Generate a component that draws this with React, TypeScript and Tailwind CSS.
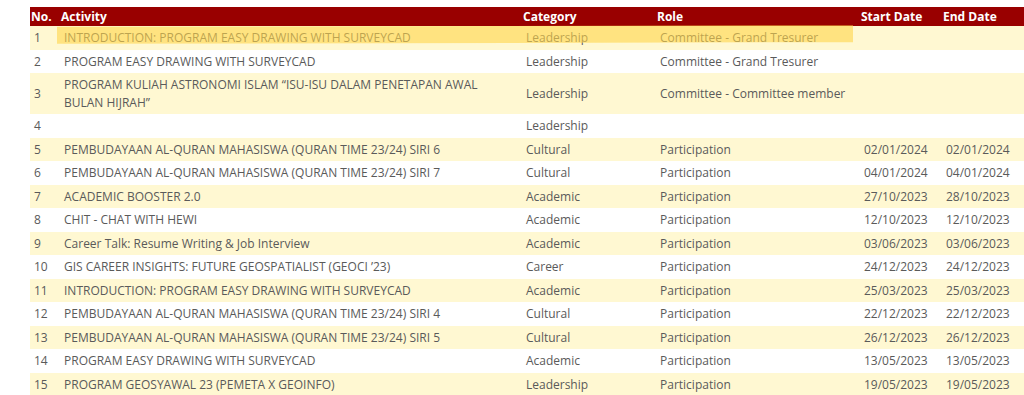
const rows: [string, string, string, string, string, string][] = [
  ["1", "INTRODUCTION: PROGRAM EASY DRAWING WITH SURVEYCAD", "Leadership", "Committee - Grand Tresurer", "", ""],
  ["2", "PROGRAM EASY DRAWING WITH SURVEYCAD", "Leadership", "Committee - Grand Tresurer", "", ""],
  ["3", "PROGRAM KULIAH ASTRONOMI ISLAM “ISU-ISU DALAM PENETAPAN AWAL BULAN HIJRAH”", "Leadership", "Committee - Committee member", "", ""],
  ["4", "", "Leadership", "", "", ""],
  ["5", "PEMBUDAYAAN AL-QURAN MAHASISWA (QURAN TIME 23/24) SIRI 6", "Cultural", "Participation", "02/01/2024", "02/01/2024"],
  ["6", "PEMBUDAYAAN AL-QURAN MAHASISWA (QURAN TIME 23/24) SIRI 7", "Cultural", "Participation", "04/01/2024", "04/01/2024"],
  ["7", "ACADEMIC BOOSTER 2.0", "Academic", "Participation", "27/10/2023", "28/10/2023"],
  ["8", "CHIT - CHAT WITH HEWI", "Academic", "Participation", "12/10/2023", "12/10/2023"],
  ["9", "Career Talk: Resume Writing & Job Interview", "Academic", "Participation", "03/06/2023", "03/06/2023"],
  ["10", "GIS CAREER INSIGHTS: FUTURE GEOSPATIALIST (GEOCI ’23)", "Career", "Participation", "24/12/2023", "24/12/2023"],
  ["11", "INTRODUCTION: PROGRAM EASY DRAWING WITH SURVEYCAD", "Academic", "Participation", "25/03/2023", "25/03/2023"],
  ["12", "PEMBUDAYAAN AL-QURAN MAHASISWA (QURAN TIME 23/24) SIRI 4", "Cultural", "Participation", "22/12/2023", "22/12/2023"],
  ["13", "PEMBUDAYAAN AL-QURAN MAHASISWA (QURAN TIME 23/24) SIRI 5", "Cultural", "Participation", "26/12/2023", "26/12/2023"],
  ["14", "PROGRAM EASY DRAWING WITH SURVEYCAD", "Academic", "Participation", "13/05/2023", "13/05/2023"],
  ["15", "PROGRAM GEOSYAWAL 23 (PEMETA X GEOINFO)", "Leadership", "Participation", "19/05/2023", "19/05/2023"],
];

const headers = ["No.", "Activity", "Category", "Role", "Start Date", "End Date"];

export default function App() {
  return (
    <div className="h-[395px] w-[1024px] overflow-hidden bg-white pl-[30px] pt-[7px] font-['Open_Sans',sans-serif] text-[12px]">
      <div className="relative">
        <table className="w-[994px] table-fixed border-collapse">
          <colgroup>
            <col className="w-[30px]" />
            <col className="w-[462px]" />
            <col className="w-[134px]" />
            <col className="w-[204px]" />
            <col className="w-[82px]" />
            <col className="w-[82px]" />
          </colgroup>
          <thead>
            <tr className="bg-[#990000] text-white">
              {headers.map((h) => (
                <th key={h} className="h-[19px] px-[1px] text-left font-bold leading-[19px]">
                  {h}
                </th>
              ))}
            </tr>
          </thead>
          <tbody>
            {rows.map((r, i) => (
              <tr key={r[0]} className={i % 2 === 0 ? "bg-[#fff8d2]" : "bg-white"}>
                {r.map((c, j) => (
                  <td key={j} className="px-[4px] py-[3px] align-middle leading-[17.5px] text-[#5a5a5a]">
                    {c}
                  </td>
                ))}
              </tr>
            ))}
          </tbody>
        </table>
        {/* marker highlight over row 1 */}
        <div className="pointer-events-none absolute left-[27px] top-[19px] h-[17px] w-[796px] -rotate-[0.12deg] bg-[#ffd54a]/60" />
      </div>
    </div>
  );
}
